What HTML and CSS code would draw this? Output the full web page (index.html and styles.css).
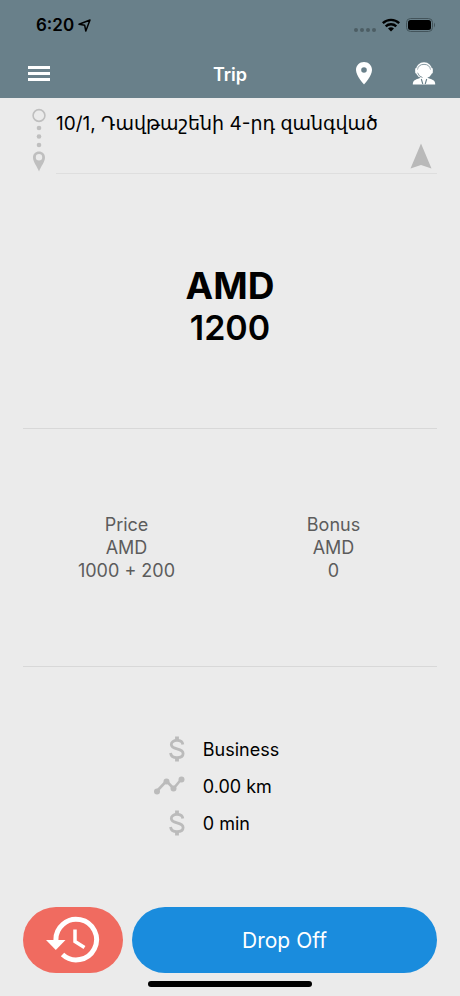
FILE: index.html
```html
<!DOCTYPE html>
<html lang="en">
<head>
<meta charset="utf-8">
<meta name="viewport" content="width=device-width, initial-scale=1">
<title>Trip</title>
<link rel="stylesheet" href="styles.css">
</head>
<body>
<header class="top">
  <div class="status">
    <span class="time">6:20</span>
    <svg class="loc" width="13" height="13" viewBox="0 0 13 13"><path d="M1 5.300 12 1 7.800 12 6.700 6.300Z" fill="none" stroke="#000" stroke-width="1.500" stroke-linejoin="round"/></svg>
    <svg class="dots" width="22" height="14" viewBox="0 0 22 14" fill="#4c5d64"><circle cx="2" cy="12" r="2"/><circle cx="8" cy="12" r="2"/><circle cx="14" cy="12" r="2"/><circle cx="20" cy="12" r="2"/></svg>
    <svg class="wifi" width="18" height="14" viewBox="0 0 18 14" fill="none" stroke="#000" stroke-width="2.400"><path d="M.8 5.200a11.800 11.800 0 0 1 16.400 0M3.700 8.400a7.700 7.700 0 0 1 10.600 0"/><path d="M6 10.600a4.400 4.400 0 0 1 6 0L9 13.600Z" fill="#000" stroke="none"/></svg>
    <svg width="30" height="14" viewBox="0 0 30 14"><rect x=".5" y=".5" width="26" height="13" rx="4" fill="none" stroke="#43545b"/><rect x="2" y="2" width="23" height="10" rx="2.500"/><path d="M28 4.500Q30 7 28 9.500Z" fill="#43545b"/></svg>
  </div>
  <nav class="bar">
    <button class="icon-btn" aria-label="Menu"><svg width="24" height="18" viewBox="0 0 24 18" fill="#fff"><path d="M1 1h22v3H1zM1 7h22v3H1zM1 13h22v3H1z"/></svg></button>
    <h1 class="title">Trip</h1>
    <div class="actions">
      <button class="icon-btn" aria-label="Map"><svg width="18" height="24" viewBox="0 0 18 24"><path d="M9 0C4.500 0 1 3.500 1 8c0 6 8 14.500 8 14.500S17 14 17 8c0-4.500-3.500-8-8-8Zm0 5.200a2.800 2.800 0 1 1 0 5.600 2.800 2.800 0 0 1 0-5.600Z" fill="#fff" fill-rule="evenodd"/></svg></button>
      <button class="icon-btn" aria-label="Support"><svg width="24" height="24" viewBox="0 0 24 24"><path d="M.8 22.500c0-3.700 1.500-4.500 7.200-6.500h8c5.700 2 7.200 2.800 7.200 6.500Z" fill="#fff"/><path d="m9.300 17 1.500 5M14.700 17l-1.500 5" stroke="#69808a" stroke-width="1.100"/><circle cx="12" cy="8.500" r="8.300" fill="#fff"/><path d="M5.300 8a6.800 6.800 0 0 1 13.400 0M5.500 10.500q1.200 4.200 5 5" fill="none" stroke="#69808a" stroke-width=".8"/><rect x="3.200" y="6" width="2.300" height="5.500" rx="1" fill="#fff"/><rect x="18.500" y="6" width="2.300" height="5.500" rx="1" fill="#fff"/></svg></button>
    </div>
  </nav>
</header>
<main class="trip">
  <section class="route">
    <svg class="route-line" width="16" height="66" viewBox="0 0 16 66" fill="#bfbfbf"><circle cx="8" cy="7.500" r="5.900" fill="none" stroke="#bfbfbf" stroke-width="1.600"/><circle cx="8" cy="20" r="2.300"/><circle cx="8" cy="28.500" r="2.300"/><circle cx="8" cy="37" r="2.300"/><path d="M8 43.500c-3.500 0-6 2.500-6 6 0 4.500 4 8.500 6 14 2-5.500 6-9.500 6-14 0-3.500-2.500-6-6-6Zm0 2.600a3.200 3.200 0 1 1 0 6.400 3.200 3.200 0 0 1 0-6.400Z" fill-rule="evenodd"/></svg>
    <div class="stops">
      <p class="address">10/1, Դավթաշենի 4-րդ զանգված</p>
      <button class="icon-btn navigate" aria-label="Navigate"><svg width="22" height="27" viewBox="0 0 22 27"><path d="m11 .5 10.500 25L11 22 .5 25.500Z" fill="#b9b9b9"/></svg></button>
    </div>
  </section>
  <section class="fare">
    <span class="currency">AMD</span>
    <span class="amount">1200</span>
  </section>
  <section class="prices">
    <div>Price<br>AMD<br>1000 + 200</div>
    <div>Bonus<br>AMD<br>0</div>
  </section>
  <section class="details">
    <ul class="facts">
      <li><svg width="16" height="26" viewBox="0 0 16 26" fill="none" stroke="#bbb" stroke-width="2.800"><path d="M13.800 8.500C13.500 5.500 11 4.400 8 4.400 4.500 4.400 2.300 6 2.300 8.500c0 6 11.800 2.500 11.800 9 0 2.800-2.600 4.200-6.100 4.200s-6-1.500-6.500-4.700"/><path d="M8 .5v4M8 21.500v4" stroke-width="3.800"/></svg><span>Business</span></li>
      <li><svg width="32" height="20" viewBox="0 0 32 20" fill="#bbb"><path d="m4 15 9.500-10 7 7.500 8-9.500" fill="none" stroke="#bbb" stroke-width="2.600"/><circle cx="4" cy="15.500" r="3"/><circle cx="13.500" cy="5.500" r="3"/><circle cx="20.500" cy="12.500" r="3"/><circle cx="28.500" cy="3.500" r="3"/></svg><span>0.00 km</span></li>
      <li><svg width="16" height="26" viewBox="0 0 16 26" fill="none" stroke="#bbb" stroke-width="2.800"><path d="M13.800 8.500C13.500 5.500 11 4.400 8 4.400 4.500 4.400 2.300 6 2.300 8.500c0 6 11.800 2.500 11.800 9 0 2.800-2.600 4.200-6.100 4.200s-6-1.500-6.500-4.700"/><path d="M8 .5v4M8 21.500v4" stroke-width="3.800"/></svg><span>0 min</span></li>
    </ul>
  </section>
</main>
<footer class="bottom">
  <div class="buttons">
    <button class="pill wait" aria-label="Waiting"><svg width="54" height="48" viewBox="0 0 54 48" fill="none" stroke="#fff"><path d="M10 25a20.300 20.300 0 1 1 6.500 13.500" stroke-width="5"/><path d="M0 24h19.500L9.800 34Z" fill="#fff" stroke="none"/><path d="M29 13.500v12l9.500 6" stroke-width="3.500"/></svg></button>
    <button class="pill drop">Drop Off</button>
  </div>
  <div class="home"></div>
</footer>
</body>
</html>
```
FILE: styles.css
```css
* { box-sizing: border-box; }
body {
  margin: 0;
  min-height: 100vh;
  display: flex;
  flex-direction: column;
  background: #ebebeb;
  color: #000;
  font-family: Inter, "DejaVu Sans", sans-serif;
  font-size: 18px;
  line-height: 23px;
}
button { border: 0; font: inherit; color: inherit; cursor: pointer; }
svg { display: block; flex: none; }
.top { background: #69808a; }
.status {
  display: flex;
  align-items: center;
  height: 50px;
  padding: 0 24px 0 36px;
}
.time { font-size: 17px; font-weight: 600; }
.loc { margin-left: 4px; }
.dots { margin-left: auto; }
.wifi { margin: 0 6px; }
.bar {
  display: grid;
  grid-template-columns: 1fr auto 1fr;
  align-items: center;
  height: 48px;
  padding: 0 24px;
}
.icon-btn { padding: 0; background: none; justify-self: start; }
.bar > .icon-btn { margin-left: 3px; }
.title { margin: 0; color: #fff; font-size: 18px; font-weight: 600; }
.actions { display: flex; justify-content: flex-end; gap: 39px; }
.trip { flex: 1; display: flex; flex-direction: column; padding: 0 23px; }
.route { display: flex; gap: 9px; padding: 10px 0 0 8px; }
.stops { flex: 1; border-bottom: 1px solid #dedede; }
.address { margin: 0; padding-top: 4px; font-size: 19px; }
.navigate { display: block; margin: 8px 5px 3px auto; }
.fare, .prices, .details { flex: 1 1 238px; display: flex; justify-content: center; }
.fare {
  flex-basis: 252px;
  flex-direction: column;
  align-items: center;
  padding-top: 10px;
  font-weight: 700;
}
.currency { font-size: 37px; line-height: 44px; }
.amount { font-size: 34px; line-height: 40px; font-weight: 600; }
.prices {
  align-items: center;
  border: solid #d8d8d8;
  border-width: 1px 0;
  color: #5c5c5c;
  text-align: center;
}
.prices div { flex: 1; }
.details { align-items: center; }
.facts { margin: 0; padding: 0 28px 2px 0; list-style: none; display: grid; gap: 11px; }
.facts li {
  display: grid;
  grid-template-columns: 32px auto;
  justify-items: end;
  align-items: center;
  column-gap: 18px;
  height: 26px;
}
.facts span { justify-self: start; }
.bottom { padding: 0 23px 9px; }
.buttons { display: flex; gap: 9px; }
.pill { height: 66px; border-radius: 33px; color: #fff; }
.wait { display: grid; place-items: center; flex: 0 0 100px; padding: 0; background: #f06b60; }
.drop { flex: 1; background: #1a8cdd; font-size: 21px; }
.home { width: 164px; height: 6px; margin: 8px auto 0; border-radius: 3px; background: #000; }
```
